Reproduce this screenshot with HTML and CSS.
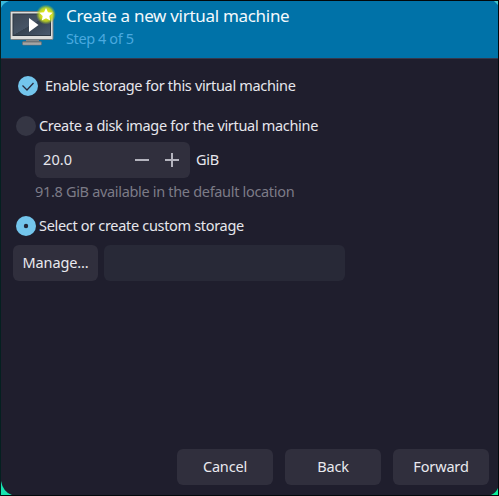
FILE: index.html
```html
<!DOCTYPE html>
<html lang="en">
<head>
<meta charset="utf-8">
<title>Create a new virtual machine</title>
<link rel="stylesheet" href="styles.css">
</head>
<body>
<div class="frame">
<main class="window">
  <header class="header">
    <svg class="vm-icon" width="50" height="46" viewBox="0 0 50 46">
      <defs>
        <radialGradient id="glow"><stop offset="0.35" stop-color="#e4ec10"/><stop offset="0.68" stop-color="#c8dc20" stop-opacity=".85"/><stop offset="1" stop-color="#9fc830" stop-opacity="0"/></radialGradient>
        <linearGradient id="screen" x2="1" y2="1"><stop stop-color="#3c4653"/><stop offset=".49" stop-color="#465466"/><stop offset=".5" stop-color="#364250"/><stop offset="1" stop-color="#4b5b70"/></linearGradient>
        <linearGradient id="stand" x2="0" y2="1"><stop stop-color="#777"/><stop offset="1" stop-color="#c8c8c6"/></linearGradient>
      </defs>
      <path d="M17 37h13v4H17z" fill="#85898b"/>
      <rect x="13.500" y="40.500" width="19" height="3.500" rx="1" fill="url(#stand)" stroke="#6a7073" stroke-width=".8"/>
      <rect x="1.500" y="10.500" width="42.500" height="28" rx="1" fill="#dcdcda" stroke="#777d80"/>
      <rect x="4" y="13" width="37.500" height="21.500" fill="url(#screen)" stroke="#2c3743"/>
      <path d="M20 17v14l9.500-7z" fill="#fff"/>
      <circle cx="37" cy="13.500" r="10" fill="url(#glow)"/>
      <path d="M37 7l2 4.300 4.600.5-3.300 3.200.9 4.600-4.200-2.300-4.200 2.300.9-4.600-3.400-3.200 4.700-.5z" fill="#fff"/>
    </svg>
    <div class="titles">
      <h1 class="title">Create a new virtual machine</h1>
      <p class="step">Step 4 of 5</p>
    </div>
  </header>
  <section class="content">
    <label class="option enable"><svg class="mark" width="20" height="20"><circle cx="10" cy="10" r="10" fill="#73c5ec"/><path d="M4.500 9.500l4.500 4.500 6.500-7" fill="none" stroke="#292b3d" stroke-width="1.300"/></svg><span class="label">Enable storage for this virtual machine</span></label>
    <label class="option create"><svg class="mark" width="20" height="20"><circle cx="10" cy="10" r="10" fill="#353644"/></svg><span class="label">Create a disk image for the virtual machine</span></label>
    <div class="size-row">
      <div class="spin"><span class="value">20.0</span>
        <svg width="14" height="14"><path d="M0 7h14" stroke="#b4b4be" stroke-width="2"/></svg>
        <svg class="plus" width="14" height="14"><path d="M0 7h14M7 0v14" stroke="#b4b4be" stroke-width="2"/></svg>
      </div>
      <span class="unit">GiB</span>
    </div>
    <p class="available">91.8 GiB available in the default location</p>
    <label class="option custom"><svg class="mark" width="20" height="20"><circle cx="10" cy="10" r="10" fill="#73c5ec"/><circle cx="10" cy="10" r="2.200" fill="#232638"/></svg><span class="label">Select or create custom storage</span></label>
    <div class="storage-row"><button class="button manage">Manage...</button><div class="path"></div></div>
  </section>
  <footer class="actions">
    <button class="button">Cancel</button><button class="button">Back</button><button class="button">Forward</button>
  </footer>
</main>
<svg class="corners" width="497" height="494">
  <path d="M0 0h8Q2 2 0 7z" fill="#39b9dc"/>
  <path d="M497 0v4l-4-4z" fill="#42c8cf"/>
  <path d="M0 480Q2 491 11 494H0z" fill="#16e5b0"/>
  <path d="M497 487v7h-7q5-2 7-7z" fill="#08f09a"/>
</svg>
</div>
</body>
</html>
```
FILE: styles.css
```css
* { box-sizing: border-box; }
body { margin: 0; background: #02080b; font: 14.5px/20px "Noto Sans", sans-serif; letter-spacing: -.32px; color: #e6e6ec; }
.frame { position: relative; width: 499px; height: 496px; padding: 1px; background: #02080b; border-left: 1px solid #042020; padding-left: 0; }
.window { height: 494px; width: 497px; display: flex; flex-direction: column; background: #1f1e2d; overflow: hidden; }
.corners { position: absolute; left: 0; top: 1px; pointer-events: none; }
.header { height: 58px; flex: none; background: #0072a8; border-bottom: 1px solid #34384c; display: flex; padding: 0 0 0 8px; }
.titles { margin-left: 7px; }
.title { margin: 4px 0 0; font-size: 17px; line-height: 22px; font-weight: 400; letter-spacing: -.3px; color: #f4f9fc; white-space: nowrap; }
.step { margin: 0; line-height: 22px; letter-spacing: -.4px; color: #4aa9df; }
.content { flex: 1; padding-left: 12px; white-space: nowrap; }
.option { display: flex; align-items: center; height: 20px; gap: 3px; margin-left: 3px; }
.mark { flex: none; }
.label, .unit, .value { padding-bottom: 2px; }
.enable { margin: 17px 0 0 5px; gap: 7px; }
.create { margin-top: 20px; }
.size-row { display: flex; align-items: center; margin: 6px 0 0 22px; gap: 6px; }
.spin { width: 155px; height: 36px; border-radius: 6px; background: #302f3d; display: flex; align-items: center; padding: 0 11px 0 8px; }
.value { flex: 1; letter-spacing: .1px; }
.plus { margin-left: 16px; }
.available { margin: 3px 0 0 22px; color: #7c7b87; }
.custom { margin-top: 15px; }
.storage-row { display: flex; gap: 6px; margin-top: 9px; }
.button { height: 36px; width: 96px; border: 0; padding: 0 0 2px; border-radius: 6px; background: #302f3d; color: #e9e9ef; font: inherit; letter-spacing: -.15px; }
.manage { width: 85px; }
.path { width: 241px; height: 36px; border-radius: 6px; background: #282937; }
.actions { display: flex; justify-content: flex-end; gap: 12px; padding: 0 9px 10px 0; }
```
